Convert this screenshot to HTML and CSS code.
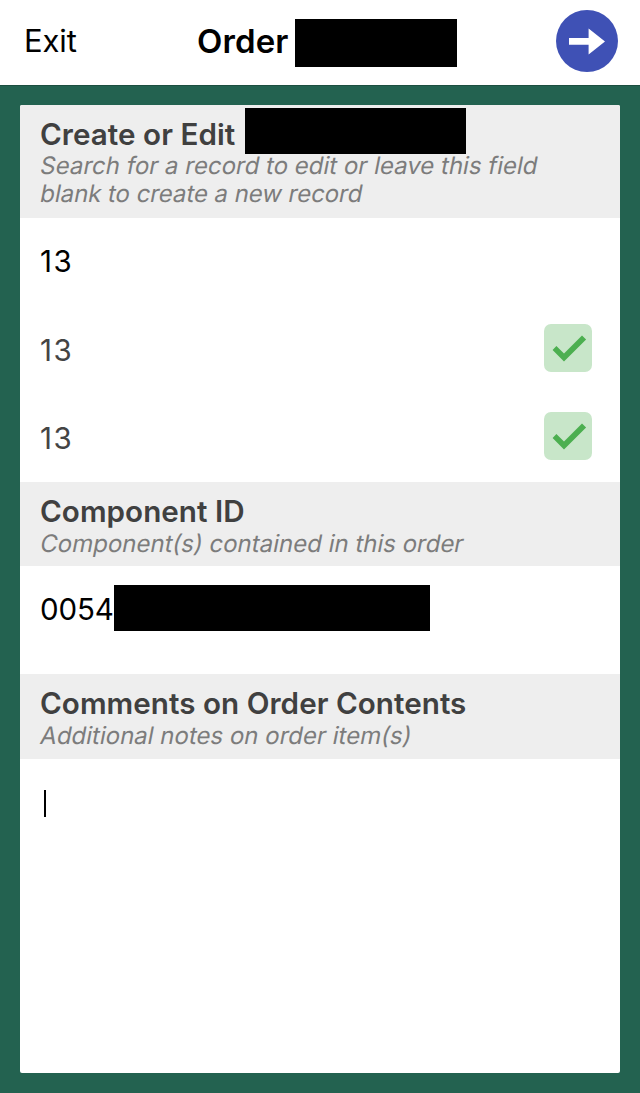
FILE: index.html
```html
<!DOCTYPE html>
<html lang="en">
<head>
<meta charset="utf-8">
<title>Order</title>
<link rel="stylesheet" href="styles.css">
</head>
<body>
<header class="topbar">
  <span class="exit">Exit</span>
  <h1 class="title">Order</h1>
  <span class="redacted redacted-title"></span>
  <svg class="next" viewBox="0 0 62 62" aria-label="Next"><circle cx="31" cy="31" r="31" fill="#3f51b5"/><path d="M13 28H32.6V18.4L49 31.4L32.6 44.6V34.8H13Z" fill="#fff"/></svg>
</header>
<main class="card">
  <section class="section-head head-record">
    <div class="heading-line"><h2 class="heading heading-edit">Create or Edit</h2><span class="redacted redacted-heading"></span></div>
    <p class="hint"><span class="hint-line">Search for a record to edit or leave this field</span><span class="hint-line hint-blank">blank to create a new record</span></p>
  </section>
  <div class="row search">13</div>
  <div class="row result"><span>13</span><svg class="check" viewBox="0 0 48 48"><rect width="48" height="48" rx="7" fill="#c8e6c9"/><path d="M8.6 26L12.4 22.1L20 29.4L38 11.4L42.1 15.4L20 37.4Z" fill="#4caf50"/></svg></div>
  <div class="row result"><span>13</span><svg class="check" viewBox="0 0 48 48"><rect width="48" height="48" rx="7" fill="#c8e6c9"/><path d="M8.6 26L12.4 22.1L20 29.4L38 11.4L42.1 15.4L20 37.4Z" fill="#4caf50"/></svg></div>
  <section class="section-head head-component">
    <h2 class="heading">Component ID</h2>
    <p class="hint"><span class="hint-line">Component(s) contained in this order</span></p>
  </section>
  <div class="row component"><span class="component-value">0054</span><span class="redacted redacted-value"></span></div>
  <section class="section-head head-comments">
    <h2 class="heading">Comments on Order Contents</h2>
    <p class="hint"><span class="hint-line">Additional notes on order item(s)</span></p>
  </section>
  <div class="comments"><span class="caret"></span></div>
</main>
</body>
</html>
```
FILE: styles.css
```css
* { box-sizing: border-box; }
body {
  margin: 0;
  height: 1093px;
  display: flex;
  flex-direction: column;
  background: #236250;
  font-family: Inter, "Liberation Sans", sans-serif;
  color: #000;
}
h1, h2, p { margin: 0; }
.topbar {
  display: flex;
  align-items: center;
  height: 86px;
  padding: 0 22px 3px 24px;
  background: #fff;
  border-bottom: 1px solid #1c4e40;
}
.exit { width: 173px; font-size: 31px; line-height: 40px; letter-spacing: -0.1px; }
.title { width: 98px; font-size: 33px; line-height: 40px; font-weight: 600; letter-spacing: 0.1px; }
.redacted { display: block; flex: none; background: #000; }
.redacted-title { width: 162px; height: 48px; margin-top: 3px; }
.next { width: 62px; height: 62px; margin-left: auto; }
.card {
  display: flex;
  flex-direction: column;
  width: 600px;
  height: 968px;
  margin: 19px 20px 20px;
  background: #fff;
  border-radius: 2px;
  overflow: hidden;
}
.section-head { flex: none; padding: 12px 20px 0; background: #eee; }
.head-record { height: 113px; padding-top: 3px; }
.head-component { height: 84px; }
.head-comments { height: 85px; }
.heading-line { display: flex; height: 44px; padding-top: 9px; }
.heading { height: 36px; font-size: 29.6px; line-height: 35px; font-weight: 600; letter-spacing: 0.04px; color: #404040; white-space: nowrap; }
.heading-edit { width: 205px; }
.redacted-heading { width: 221px; height: 46px; margin-top: -9px; }
.hint { margin-left: -1px; font-size: 24px; line-height: 28px; color: #7c7c7c; white-space: nowrap; }
/* Slanted roman keeps the double-storey "a" that the italic face drops. */
.hint-line { display: block; width: max-content; transform: skewX(-11deg); transform-origin: 0 80%; }
.hint-blank { letter-spacing: -0.06px; }
.row { flex: none; display: flex; align-items: center; height: 88px; padding: 0 28px 0 20px; font-size: 29.5px; line-height: 36px; letter-spacing: 1.4px; }
.search { padding-bottom: 3px; }
.result { color: #444; }
.check { width: 48px; height: 48px; margin: 0 0 4px auto; }
.component { height: 108px; align-items: flex-start; padding-top: 19px; letter-spacing: -0.1px; }
.component-value { width: 74px; padding-top: 6px; }
.redacted-value { width: 316px; height: 46px; }
.comments { flex: 1; padding: 31px 24px; }
.caret { display: block; width: 2px; height: 27px; background: #000; }
```
